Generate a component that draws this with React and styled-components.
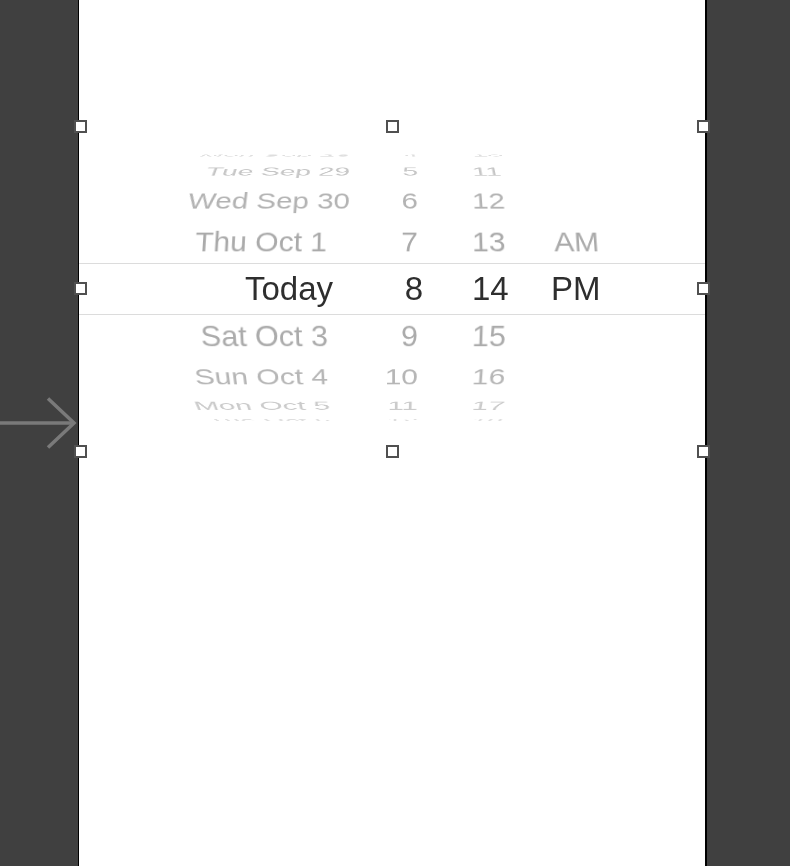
import styled, { createGlobalStyle } from "styled-components";

const GlobalStyle = createGlobalStyle`
  html, body {
    margin: 0;
    background: #404040;
    font-family: "Liberation Sans", Arial, sans-serif;
  }
`;

const Page = styled.div`
  display: flex;
  height: 100vh;
  overflow: hidden;
`;

const Gutter = styled.div`
  width: 78px;
  flex-shrink: 0;
  padding-top: 397px;
  box-sizing: border-box;
  svg {
    display: block;
  }
`;

const Canvas = styled.div`
  width: 626px;
  flex-shrink: 0;
  background: #fff;
  border-left: 1px solid #000;
  border-right: 2px solid #000;
  padding-top: 126px;
`;

const Frame = styled.div`
  position: relative;
  height: 325px;
  padding-top: 24px;
  box-sizing: border-box;
`;

const Handle = styled.span`
  position: absolute;
  left: ${(p) => p.$x - 6.5}px;
  top: ${(p) => p.$y - 6.5}px;
  width: 13px;
  height: 13px;
  box-sizing: border-box;
  border: 2px solid #505050;
  background: #fff;
`;

const Wheel = styled.div`
  height: 274px;
  overflow: hidden;
  display: flex;
  flex-direction: column;
  perspective: 950px;
  perspective-origin: 50% 138px;
`;

const Row = styled.div`
  flex-shrink: 0;
  display: grid;
  grid-template-columns: 272px 73px 127px 1fr;
  height: ${(p) => p.$h}px;
  line-height: ${(p) => (p.$selected ? p.$h - 2 : p.$h)}px;
  box-sizing: border-box;
  font-size: ${(p) => p.$size}px;
  color: ${(p) => p.$color};
  white-space: nowrap;
  transform: rotateX(${(p) => p.$angle}deg);
  border-top: ${(p) => (p.$selected ? "1px solid #dcdcdc" : "none")};
  border-bottom: ${(p) => (p.$selected ? "1px solid #dcdcdc" : "none")};
`;

const DateCell = styled.span`
  text-align: right;
  padding-right: ${(p) => p.$pr}px;
`;

const HourCell = styled.span`
  text-align: right;
  padding-right: ${(p) => p.$pr}px;
`;

const MinuteCell = styled.span`
  padding-left: 48px;
`;

const PeriodCell = styled.span`
  padding-left: ${(p) => p.$pl}px;
`;

const rows = [
  { date: "Mon Sep 28", hour: "4", minute: "10", h: 11, angle: 76, size: 28, color: "#dedede", datePad: 0 },
  { date: "Tue Sep 29", hour: "5", minute: "11", h: 21, angle: 58, size: 28, color: "#c6c6c6", datePad: 1 },
  { date: "Wed Sep 30", hour: "6", minute: "12", h: 38, angle: 36, size: 29.5, color: "#b3b3b3", datePad: 1 },
  { date: "Thu Oct 1", hour: "7", minute: "13", period: "AM", h: 43, angle: 18, size: 30, color: "#aaaaaa", datePad: 24 },
  { date: "Today", hour: "8", minute: "14", period: "PM", h: 52, angle: 0, size: 33, color: "#2e2e2e", datePad: 18, selected: true },
  { date: "Sat Oct 3", hour: "9", minute: "15", h: 43, angle: -19, size: 30.5, color: "#ababab", datePad: 23 },
  { date: "Sun Oct 4", hour: "10", minute: "16", h: 37, angle: -36, size: 30, color: "#b6b6b6", datePad: 23 },
  { date: "Mon Oct 5", hour: "11", minute: "17", h: 21, angle: -59, size: 29.5, color: "#cbcbcb", datePad: 21 },
  { date: "Tue Oct 6", hour: "12", minute: "18", h: 8, angle: -76, size: 28, color: "#dedede", datePad: 21 },
];

const handles = [
  [1.5, 0], [313, 0], [624.5, 0],
  [1.5, 162.5], [624.5, 162.5],
  [1.5, 325], [313, 325], [624.5, 325],
];

const EntryArrow = () => (
  <svg width="78" height="52" viewBox="0 0 78 52">
    <g stroke="#7a7a7a" strokeWidth="3.5" fill="none">
      <path d="M0 26H74" />
      <path d="M48 1.5L74 26L48 50.5" />
    </g>
  </svg>
);

const App = () => {
  return (
    <>
      <GlobalStyle />
      <Page>
        <Gutter>
          <EntryArrow />
        </Gutter>
        <Canvas>
          <Frame>
            <Wheel>
              {rows.map((r) => (
                <Row
                  key={r.date}
                  $h={r.h}
                  $angle={r.angle}
                  $size={r.size}
                  $color={r.color}
                  $selected={r.selected}
                >
                  <DateCell $pr={r.datePad}>{r.date}</DateCell>
                  <HourCell $pr={r.selected ? 1 : 6}>{r.hour}</HourCell>
                  <MinuteCell>{r.minute}</MinuteCell>
                  <PeriodCell $pl={r.selected ? 0 : 3}>{r.period}</PeriodCell>
                </Row>
              ))}
            </Wheel>
            {handles.map(([x, y]) => (
              <Handle key={`${x}-${y}`} $x={x} $y={y} />
            ))}
          </Frame>
        </Canvas>
      </Page>
    </>
  );
};

export default App;
